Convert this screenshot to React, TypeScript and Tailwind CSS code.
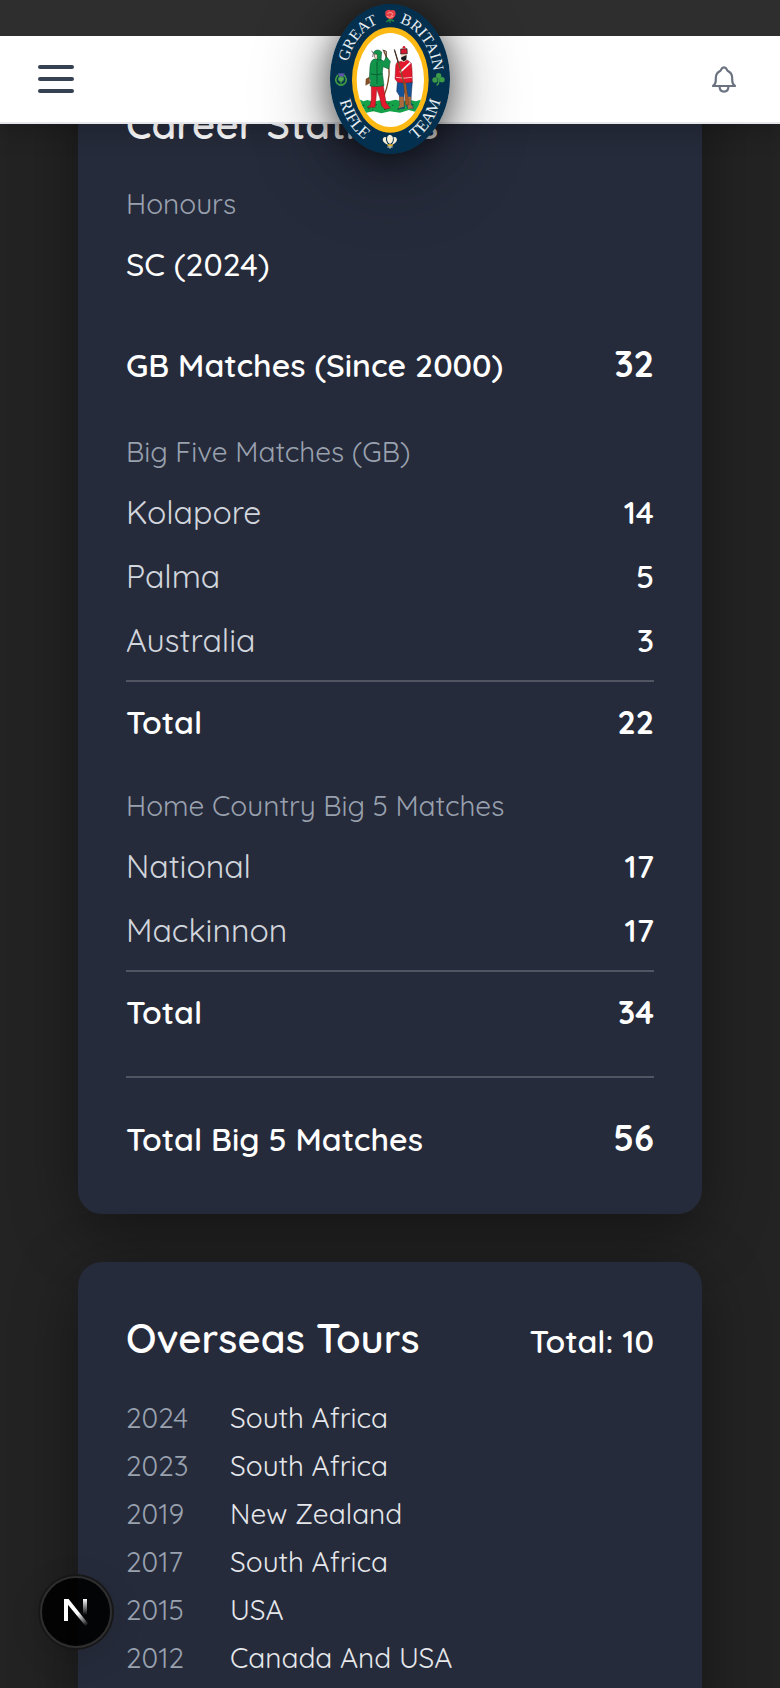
import React from "react";

const bigFiveRows = [
  { label: "Kolapore", value: 14 },
  { label: "Palma", value: 5 },
  { label: "Australia", value: 3 },
];

const homeRows = [
  { label: "National", value: 17 },
  { label: "Mackinnon", value: 17 },
];

const tours = [
  { year: 2024, place: "South Africa" },
  { year: 2023, place: "South Africa" },
  { year: 2019, place: "New Zealand" },
  { year: 2017, place: "South Africa" },
  { year: 2015, place: "USA" },
  { year: 2012, place: "Canada And USA" },
];

function Crest() {
  return (
    <svg viewBox="60 12 360 450" className="block h-[150px] w-[120px]" role="img" aria-label="Great Britain Rifle Team">
      <defs>
        <path id="arc-great" d="M110 208 A130 173 0 0 1 226 66" />
        <path id="arc-britain" d="M256 66 A130 173 0 0 1 371 226" />
        <path id="arc-rifle" d="M82 262 A160 206 0 0 0 200 438" />
        <path id="arc-team" d="M280 438 A160 206 0 0 0 398 262" />
        <clipPath id="crest-field">
          <ellipse cx="241" cy="240" rx="101" ry="141" />
        </clipPath>
      </defs>
      <ellipse cx="240" cy="237" rx="180" ry="225" fill="#03304f" />
      <ellipse cx="241" cy="240" rx="115" ry="158" fill="#fdb913" />
      <ellipse cx="241" cy="240" rx="101" ry="141" fill="#fff" />
      <g fill="#e8eef2" fontFamily="'Liberation Serif', serif" fontSize="47" textAnchor="middle">
        <text><textPath href="#arc-great" startOffset="50%">GREAT</textPath></text>
        <text><textPath href="#arc-britain" startOffset="50%">BRITAIN</textPath></text>
        <text fontSize="50"><textPath href="#arc-rifle" startOffset="50%">RIFLE</textPath></text>
        <text fontSize="50"><textPath href="#arc-team" startOffset="50%">TEAM</textPath></text>
      </g>

      {/* grass */}
      <g clipPath="url(#crest-field)">
        <path d="M140 304 L152 299 160 304 172 300 190 305 214 300 236 304 256 299 276 304 300 300 318 304 332 299 345 303 V330 L318 336 296 330 270 338 240 334 214 340 190 334 166 339 140 332Z" fill="#15a04a" />
        <path d="M158 316h5M174 326h5M196 314h5M222 328h5M246 316h5M262 328h5M306 314h5M322 326h5M186 330h4M234 310h4" stroke="#075c2b" strokeWidth="3" />
      </g>

      {/* archer */}
      <g strokeLinejoin="round">
        <path d="M221 152 C238 184 240 220 234 246 C231 264 227 276 222 286" fill="none" stroke="#7a4a24" strokeWidth="4" />
        <path d="M218 150 L229 154 228 180" fill="none" stroke="#40301f" strokeWidth="3" />
        <path d="M184 250 L184 296 181 315 171 322 195 322 198 296 200 266 209 292 215 318 226 328 241 324 228 308 219 252Z" fill="#e2182d" stroke="#7c1822" strokeWidth="1.5" />
        <path d="M192 177 Q182 181 180 200 L178 234 182 242 180 258 Q202 262 222 257 L217 218 219 200 236 207 241 184 229 170 222 184 212 178Z" fill="#12954b" stroke="#075530" strokeWidth="1.5" />
        <path d="M182 222 Q201 227 218 221 M201 184 V252" stroke="#075530" strokeWidth="2.5" fill="none" />
        <path d="M193 162 Q191 174 200 178 Q210 172 207 162Z" fill="#f4dcc4" stroke="#2d2a20" strokeWidth="1.5" />
        <path d="M202 180 L202 163 190 160 193 154 Q204 145 215 156 L213 180Z" fill="#12954b" stroke="#073f25" strokeWidth="1.5" />
        <path d="M185 152 L190 160 188 171" stroke="#222" strokeWidth="2" fill="none" />
        <path d="M177 232 L168 237 167 256 180 249Z" fill="#865026" stroke="#4e2c13" />
      </g>

      {/* rifleman */}
      <g strokeLinejoin="round">
        <path d="M262 247 L260 274 268 287 270 318 265 326 283 325 282 284 287 263 292 286 290 316 294 326 311 325 303 309 304 282 307 246Z" fill="#145295" stroke="#182a4a" strokeWidth="1.5" />
        <path d="M267 290h14l1 30 -18 5 5-9Z M290 290h13l-1 22 9 13 -17 2Z" fill="#a86b3d" />
        <path d="M269 185 Q258 184 257 199 L255 237 263 247 Q285 252 307 246 L306 209 304 190 293 181Z" fill="#e2182d" stroke="#7c1822" strokeWidth="1.5" />
        <path d="M270 217 L301 188" stroke="#fff" strokeWidth="5" />
        <path d="M258 232 Q282 237 306 232" stroke="#fff" strokeWidth="2" fill="none" />
        <path d="M254 152 L266 190 281 245 291 314" fill="none" stroke="#81502d" strokeWidth="4" />
        <path d="M253 148 L265 189" stroke="#333" strokeWidth="3" />
        <path d="M281 243 L288 252 297 314 287 315Z" fill="#a45a27" stroke="#613214" />
        <path d="M274 162h16v14l-6 9h-7l-4-9Z" fill="#f4dcc4" />
        <path d="M274 172 L290 165 289 179 281 184 273 177Z" fill="#171b20" />
        <path d="M272 147 L291 146 292 161 272 162Z" fill="#d71a2e" stroke="#171b20" strokeWidth="2" />
        <circle cx="282" cy="142" r="4" fill="#d71a2e" />
      </g>

      {/* rose */}
      <path d="M240 50 V68 M240 57 L229 66 M240 57 L252 64" stroke="#279142" strokeWidth="4" />
      <path d="M226 35 Q233 26 243 31 Q257 27 257 43 Q253 58 241 57 Q230 57 226 46Z" fill="#e43e48" />
      <path d="M233 42 Q237 32 246 39 Q252 44 243 49M230 49 Q239 56 249 49" fill="none" stroke="#ff9b91" strokeWidth="3" />

      {/* thistle */}
      <path d="M85 225 C76 231 74 245 84 252 Q93 259 102 252 C112 245 110 231 101 225" fill="none" stroke="#3f9a44" strokeWidth="5" />
      <path d="M88 231h12l4-11H84Z" fill="#5a55a5" />
      <path d="M86 233 Q93 228 101 233 L100 241 93 246 86 241Z M93 244v12" fill="#58a84e" stroke="#3f9a44" strokeWidth="3" />

      {/* shamrock */}
      <g fill="#3b9b47">
        <circle cx="386" cy="227" r="8" />
        <circle cx="375" cy="240" r="8" />
        <circle cx="396" cy="239" r="8" />
        <path d="M384 233 Q387 248 378 255 L383 257 Q391 249 389 233Z" />
      </g>

      {/* feathers */}
      <path d="M240 432 Q228 424 232 410 Q239 399 248 410 Q252 424 240 432Z" fill="#f6efd9" />
      <path d="M235 434 Q220 430 218 419 Q219 408 229 412 Q225 422 235 434ZM245 434 Q259 430 261 419 Q260 408 250 412 Q255 422 245 434Z" fill="#f6efd9" />
      <path d="M231 433 L250 433 247 439 234 439Z" fill="#e6b332" />
      <path d="M232 441h16M240 438v8" stroke="#e0dccd" strokeWidth="3" />
    </svg>
  );
}

function BellIcon() {
  return (
    <svg viewBox="0 0 24 27" className="h-[27px] w-6" fill="none" stroke="#6b7280" strokeWidth="2.2" strokeLinejoin="round" strokeLinecap="round" aria-hidden="true">
      <path d="M1 20 C2.8 19 3.8 17.5 3.8 14 V12 C3.8 8.5 5.6 6.2 8.4 4.8 C9.4 4.2 9 1.4 12 1.4 S14.6 4.2 15.6 4.8 C18.4 6.2 20.2 8.5 20.2 12 V14 C20.2 17.5 21.2 19 23 20 Z" />
      <path d="M7.6 20.5 C7.6 23.6 9.4 25.6 12 25.6 S16.4 23.6 16.4 20.5" />
    </svg>
  );
}

function Caption({ children }: { children: React.ReactNode }) {
  return <h3 className="text-[28px] leading-10 font-normal text-gray-400">{children}</h3>;
}

function StatRow({ label, value }: { label: string; value: number }) {
  return (
    <div className="flex items-baseline justify-between text-[32px] leading-[48px]">
      <dt className="text-gray-300">{label}</dt>
      <dd className="font-semibold">{value}</dd>
    </div>
  );
}

function StatGroup({ title, rows, total }: { title: string; rows: { label: string; value: number }[]; total: number }) {
  return (
    <div className="mt-10">
      <Caption>{title}</Caption>
      <dl className="mt-4 flex flex-col gap-4">
        {rows.map((row) => (
          <StatRow key={row.label} label={row.label} value={row.value} />
        ))}
        <div className="flex items-baseline justify-between border-t-2 border-white/20 pt-4 text-[32px] leading-[48px]">
          <dt className="font-semibold">Total</dt>
          <dd className="font-bold">{total}</dd>
        </div>
      </dl>
    </div>
  );
}

function Headline({ label, value }: { label: string; value: number }) {
  return (
    <div className="flex items-baseline justify-between">
      <span className="text-[32px] leading-[48px] font-semibold">{label}</span>
      <span className="text-4xl leading-[56px] font-bold">{value}</span>
    </div>
  );
}

const card = "rounded-3xl bg-[#262b3b] p-12 shadow-[0_16px_64px_rgba(0,0,0,0.4)]";

export default function App() {
  return (
    <div className="flex h-screen flex-col overflow-hidden bg-[#232323] font-['Quicksand','Lato',sans-serif] text-white">
      <header className="relative z-10 shrink-0 bg-[#2e2e2e] pt-9 shadow-[0_8px_24px_rgba(0,0,0,0.2)]">
        <div className="flex h-22 items-center justify-between border-b-2 border-gray-200 bg-white px-[38px]">
          <button type="button" aria-label="Open menu" className="flex w-9 flex-col gap-2">
            <span className="h-1 rounded-full bg-gray-700" />
            <span className="h-1 rounded-full bg-gray-700" />
            <span className="h-1 rounded-full bg-gray-700" />
          </button>
          <button type="button" aria-label="Notifications" className="px-1.5">
            <BellIcon />
          </button>
        </div>
        <a href="#home" className="absolute top-1 left-1/2 -translate-x-1/2 rounded-[50%] shadow-[0_16px_80px_rgba(0,0,0,0.4),0_4px_32px_rgba(0,0,0,0.5)]">
          <Crest />
        </a>
      </header>

      <main className="min-h-0 flex-1 overflow-hidden">
        <div className="mx-auto -mt-[76px] flex w-4/5 flex-col gap-12">
          <section className={card}>
            <h2 className="text-[40px] leading-[56px] font-semibold">Career Statistics</h2>
            <div className="mt-8">
              <Caption>Honours</Caption>
              <p className="mt-4 text-[32px] leading-[48px] font-medium">SC (2024)</p>
            </div>
            <div className="mt-12">
              <Headline label="GB Matches (Since 2000)" value={32} />
            </div>
            <StatGroup title="Big Five Matches (GB)" rows={bigFiveRows} total={22} />
            <StatGroup title="Home Country Big 5 Matches" rows={homeRows} total={34} />
            <div className="mt-10 border-t-2 border-white/20 pt-8">
              <Headline label="Total Big 5 Matches" value={56} />
            </div>
          </section>

          <section className={card}>
            <div className="flex items-baseline justify-between">
              <h2 className="text-[40px] leading-[56px] font-semibold">Overseas Tours</h2>
              <span className="text-[32px] leading-[48px] font-semibold">Total: 10</span>
            </div>
            <ul className="mt-8 flex flex-col gap-2 text-[28px] leading-10">
              {tours.map((tour) => (
                <li key={tour.year} className="flex gap-6">
                  <span className="w-20 text-gray-400">{tour.year}</span>
                  <span className="text-gray-200">{tour.place}</span>
                </li>
              ))}
            </ul>
          </section>
        </div>
      </main>

      <button
        type="button"
        aria-label="Open developer tools"
        className="fixed bottom-10 left-10 z-20 flex size-18 items-center justify-center rounded-full border-2 border-[#2e2e2e] bg-black/90 shadow-[0_0_0_2px_#171717,0_8px_32px_rgba(0,0,0,0.15)]"
      >
        <svg viewBox="0 0 26 28" className="h-7 w-[26px]" aria-hidden="true">
          <defs>
            <linearGradient id="n-diagonal" x1="14" y1="16" x2="24" y2="28" gradientUnits="userSpaceOnUse">
              <stop stopColor="#fff" />
              <stop offset="1" stopColor="#fff" stopOpacity="0" />
            </linearGradient>
            <linearGradient id="n-stem" x1="21" y1="1" x2="21" y2="17" gradientUnits="userSpaceOnUse">
              <stop stopColor="#fff" />
              <stop offset="1" stopColor="#fff" stopOpacity="0" />
            </linearGradient>
          </defs>
          <path d="M1 1H5V23H1Z" fill="#fff" />
          <path d="M1 1H5.6L25.5 26 22.5 28 1 2Z" fill="url(#n-diagonal)" />
          <path d="M20 1H24V18H20Z" fill="url(#n-stem)" />
        </svg>
      </button>
    </div>
  );
}
